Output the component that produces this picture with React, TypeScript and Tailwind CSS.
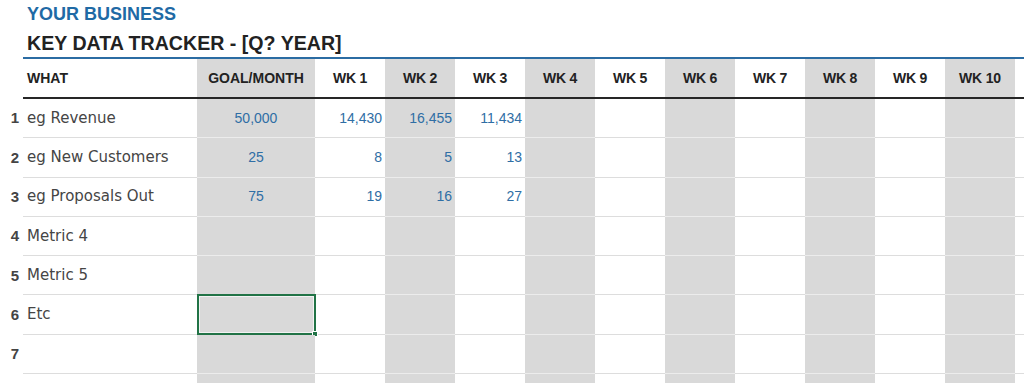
import React from "react";

const weeks = ["WK 1", "WK 2", "WK 3", "WK 4", "WK 5", "WK 6", "WK 7", "WK 8", "WK 9", "WK 10"];

type Row = { n: string; label: string; goal: string; wk: string[] };

const rows: Row[] = [
  { n: "1", label: "eg Revenue", goal: "50,000", wk: ["14,430", "16,455", "11,434"] },
  { n: "2", label: "eg New Customers", goal: "25", wk: ["8", "5", "13"] },
  { n: "3", label: "eg Proposals Out", goal: "75", wk: ["19", "16", "27"] },
  { n: "4", label: "Metric 4", goal: "", wk: [] },
  { n: "5", label: "Metric 5", goal: "", wk: [] },
  { n: "6", label: "Etc", goal: "", wk: [] },
  { n: "7", label: "", goal: "", wk: [] },
  { n: "", label: "", goal: "", wk: [] },
];

const arial = { fontFamily: '"Liberation Sans", Arial, sans-serif' };
const gothic = { fontFamily: '"DejaVu Sans", "Liberation Sans", sans-serif' };

export default function App() {
  return (
    <div className="w-[1024px] h-[383px] overflow-hidden bg-white relative">
      {/* Titles */}
      <div className="h-[57px] pl-[27px] flex flex-col" style={arial}>
        <div className="h-[28px] pt-[2px] text-[18px] font-bold leading-[24px] text-[#1f6aa5]">YOUR BUSINESS</div>
        <div className="text-[19.6px] font-bold leading-[24px] text-[#222222] pt-[3px]">KEY DATA TRACKER - [Q? YEAR]</div>
      </div>
      <div className="ml-[23px] h-[2px] bg-[#2b6ca3]" />

      {/* Header row */}
      <div className="flex h-[38px]" style={arial}>
        <div className="w-[23px] shrink-0" />
        <div className="w-[174px] shrink-0 flex items-center pl-[4px] text-[14px] font-bold text-[#222]">WHAT</div>
        <div className="w-[118px] shrink-0 bg-[#d9d9d9] flex items-center justify-center text-[14px] font-bold text-[#222]">GOAL/MONTH</div>
        {weeks.map((w, i) => (
          <div
            key={w}
            className={`w-[70px] shrink-0 flex items-center justify-center text-[14px] font-bold tracking-[-0.2px] text-[#222] ${i % 2 === 1 ? "bg-[#d9d9d9]" : ""}`}
          >
            {w}
          </div>
        ))}
        <div className="flex-1" />
      </div>
      <div className="ml-[23px] h-[2px] bg-[#262626]" />

      {/* Data rows */}
      {rows.map((r, ri) => (
        <div key={ri} className="flex h-[39.3px]">
          <div
            className="w-[23px] shrink-0 flex items-center justify-end pr-[4px] text-[15px] font-bold text-[#444]"
            style={arial}
          >
            {r.n}
          </div>
          <div
            className="w-[174px] shrink-0 flex items-center pl-[4px] text-[15px] text-[#454545] border-b border-[#dddddd]"
            style={gothic}
          >
            {r.label}
          </div>
          <div
            className="relative w-[118px] shrink-0 bg-[#d9d9d9] flex items-center justify-center text-[14px] text-[#2f6ea5] border-b border-[#ececec]"
            style={arial}
          >
            {r.goal}
            {r.n === "6" && (
              <div className="absolute top-[-1px] bottom-[-1px] left-0 right-[-1px] border-2 border-[#217346]">
                <div className="absolute inset-0 border border-[#f2f2f2]" />
                <div className="absolute right-[-4px] bottom-[-4px] w-[6px] h-[6px] bg-[#217346] border border-white" />
              </div>
            )}
          </div>
          {weeks.map((w, i) => (
            <div
              key={w}
              className={`w-[70px] shrink-0 flex items-center justify-end pr-[3px] text-[14px] text-[#2f6ea5] border-b ${
                i % 2 === 1 ? "bg-[#d9d9d9] border-[#ececec]" : "border-[#dddddd]"
              }`}
              style={arial}
            >
              {r.wk[i] ?? ""}
            </div>
          ))}
          <div className="flex-1 border-b border-[#dddddd]" />
        </div>
      ))}
    </div>
  );
}
